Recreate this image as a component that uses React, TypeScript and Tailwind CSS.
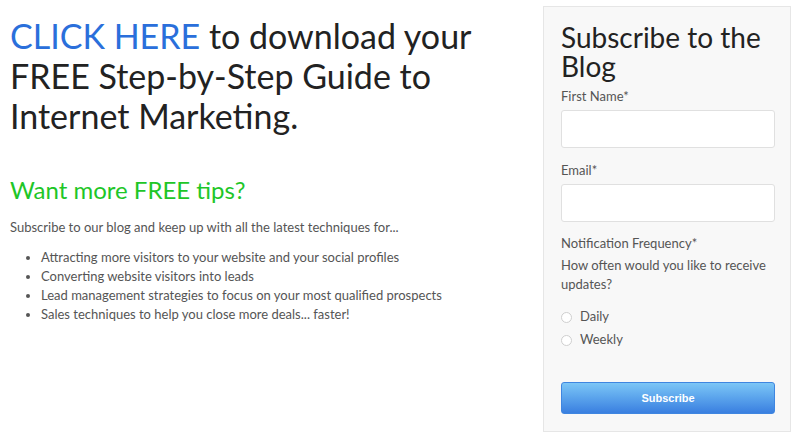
import React from "react";

export default function App() {
  const items = [
    "Attracting more visitors to your website and your social profiles",
    "Converting website visitors into leads",
    "Lead management strategies to focus on your most qualified prospects",
    "Sales techniques to help you close more deals... faster!",
  ];
  return (
    <div
      className="w-[800px] h-[440px] bg-white flex overflow-hidden"
      style={{ fontFamily: "Lato, 'Noto Sans', sans-serif" }}
    >
      <div className="w-[543px] pl-[10px] pt-[16px] shrink-0">
        <h1 className="w-[470px] text-[34px] leading-[40px] text-[#222] font-normal">
          <span className="text-[#2a6fdb]">CLICK HERE</span> to download your FREE Step-by-Step Guide to Internet Marketing.
        </h1>
        <h2 className="mt-[39px] text-[24px] leading-[30px] text-[#1ec628]">Want more FREE tips?</h2>
        <p className="mt-[13px] text-[13px] leading-[19px] text-[#555]">
          Subscribe to our blog and keep up with all the latest techniques for...
        </p>
        <ul className="mt-[11px] pl-[31px] list-disc text-[13px] leading-[19px] text-[#555]">
          {items.map((t) => (
            <li key={t}>{t}</li>
          ))}
        </ul>
      </div>
      <div className="mt-[6px] w-[248px] h-[426px] bg-[#f8f8f8] border border-[#e6e6e6] pl-[17px] pr-[15px] pt-[16px]">
        <h3 className="text-[28px] leading-[29px] text-[#222]">Subscribe to the Blog</h3>
        <label className="block mt-[6px] text-[13px] leading-[18px] text-[#555]">First Name*</label>
        <div className="mt-[5px] h-[38px] bg-white border border-[#e0e0e0] rounded-[3px]" />
        <label className="block mt-[13px] text-[13px] leading-[18px] text-[#555]">Email*</label>
        <div className="mt-[5px] h-[38px] bg-white border border-[#e0e0e0] rounded-[3px]" />
        <label className="block mt-[12px] text-[13px] leading-[18px] text-[#555]">Notification Frequency*</label>
        <p className="mt-[4px] text-[13px] leading-[19px] text-[#555]">How often would you like to receive updates?</p>
        <div className="mt-[14px] flex flex-col gap-[5px]">
          {["Daily", "Weekly"].map((o) => (
            <div key={o} className="flex items-center gap-[8px] h-[18px] text-[13px] text-[#555]">
              <span className="w-[11px] h-[11px] rounded-full border border-[#cfcfcf] bg-white" />
              {o}
            </div>
          ))}
        </div>
        <button
          className="mt-[33px] w-full h-[32px] rounded-[3px] border border-[#3f86e0] bg-gradient-to-b from-[#7cc6f6] to-[#3a7fe0] text-white text-[11px] font-bold"
          style={{ fontFamily: "'Liberation Sans', Arial, sans-serif" }}
        >
          Subscribe
        </button>
      </div>
    </div>
  );
}
